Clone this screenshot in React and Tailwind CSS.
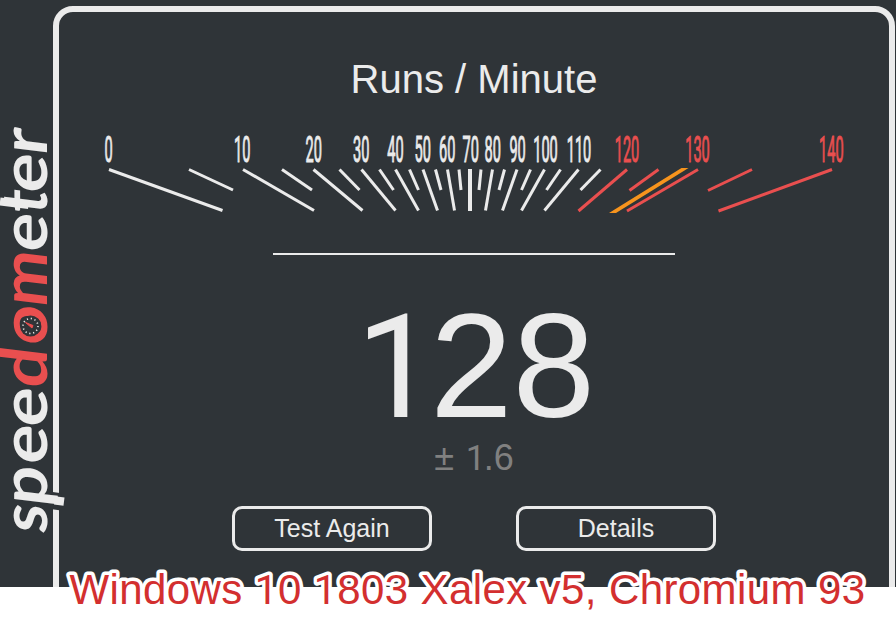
const LIGHT = '#ebebeb';
const RED = '#e94f4f';
const DARK = '#2f3438';

// Each mark: [top x, bottom x, bottom y]
const MARKS = [
  [109, 222.5, 210.5], [189, 233, 190], [243, 314, 210.5], [282, 312, 190],
  [313.5, 362.5, 210.5], [339.5, 359.5, 190], [361.5, 395.5, 210.5], [379.5, 393.5, 190],
  [395.5, 418.5, 210.5], [409.5, 418.5, 190], [423, 437.5, 210.5], [435.5, 441, 190],
  [447.5, 454.5, 210.5], [459, 461, 190], [481, 479, 190], [492.5, 485.5, 210.5],
  [504.5, 499, 190], [517, 502.5, 210.5], [530.5, 521.5, 190], [544.5, 521.5, 210.5],
  [560.5, 546.5, 190], [578.5, 544.5, 210.5], [600.5, 580.5, 190],
];
const RED_MARKS = [
  [627, 578.5, 211], [658.5, 629.5, 190.5], [698, 627, 211], [752, 708, 190.5], [832, 718.5, 211],
];
const NUMBERS = [
  [0, 108.5], [10, 242.2], [20, 313.8], [30, 361.3], [40, 395.5], [50, 422.8], [60, 447.2],
  [70, 470.8], [80, 492.8], [90, 517.6], [100, 545.5], [110, 579], [120, 627], [130, 697.5], [140, 831.3],
];

// Letters run along the rotated baseline: [letter, centre, colour, width factor]
const LETTERS = [
  ['p', 52.3, LIGHT, 1.08], ['s', 19.5, LIGHT, 1.02], ['e', 93.7, LIGHT, 1.14], ['e', 131, LIGHT, 1.14], ['d', 170.5, RED, 1.1],
  ['o', 213, RED, 1.08], ['m', 259.5, RED, 1.04], ['e', 305.7, LIGHT, 1.12], ['t', 336, LIGHT, 0.95], ['e', 365, LIGHT, 1.14], ['r', 396.5, LIGHT, 1.08],
];

function Logo() {
  return (
    <svg className="relative z-10 block shrink-0 overflow-visible" width="53" height="587">
      <g transform="translate(46.5 540) rotate(-90)">
        <path d="M39.500 5L38.300 14" stroke={DARK} strokeWidth="17" />
        {LETTERS.map(([ch, x, fill, w], i) => (
          <text
            key={i}
            transform={`translate(${x} 0) skewX(-7) scale(${w} 1)`}
            textAnchor="middle"
            fill={fill}
            className="font-['Lato',sans-serif] text-[64px] font-bold"
          >
            {ch}
          </text>
        ))}
        <path d="M39.600 8L38.400 17.500" stroke={LIGHT} strokeWidth="8.300" />
        <path d="M335 -18L338.500 -46.500" stroke={LIGHT} strokeWidth="8" />
      </g>
      <circle cx="30.500" cy="326" r="10.500" fill={DARK} />
      <circle cx="30.500" cy="326" r="7.500" fill="none" stroke={LIGHT} strokeWidth="1.600" strokeDasharray="1.200 2.727" />
      <path d="M25.500 322.500L33 325.500L32 328Z" fill={RED} stroke={RED} strokeWidth="1" />
    </svg>
  );
}

function Gauge() {
  return (
    <svg className="mt-[26px] block" width="760" height="90" viewBox="94 126 760 90">
      {NUMBERS.map(([n, x]) => (
        <text
          key={n}
          transform={`translate(${x} 161.700) scale(0.4 1)`}
          textAnchor="middle"
          fill={n >= 120 ? RED : LIGHT}
          stroke={n >= 120 ? RED : LIGHT}
          strokeWidth="1"
          className="font-['Roboto',sans-serif] text-[36.5px]"
        >
          {n}
        </text>
      ))}
      {MARKS.map(([a, b, y]) => (
        <path key={a} d={`M${a} 169.500L${b} ${y}`} stroke={LIGHT} strokeWidth="3" />
      ))}
      <path d="M470 169V211" stroke={LIGHT} strokeWidth="4" />
      {RED_MARKS.map(([a, b, y]) => (
        <path key={a} d={`M${a} 169.500L${b} ${y}`} stroke={RED} strokeWidth="3" />
      ))}
      <path d="M681.500 168H688.500L616 213H609Z" fill="#f7941d" />
    </svg>
  );
}

function Button({ children }) {
  return (
    <button className="h-[45px] w-[200px] rounded-[10px] border-[3px] border-[#ebebeb] text-[25px] leading-[39px] text-[#ebebeb]">
      {children}
    </button>
  );
}

// Footless figure one
const one = <span className="mr-[-0.05em] ml-[0.05em] font-['Roboto',sans-serif] text-[0.97em] leading-none">1</span>;
const svgOne = <tspan className="font-['Roboto',sans-serif] text-[40.7px]">1</tspan>;

export default function App() {
  return (
    <div className="h-[626px] w-[896px] overflow-hidden bg-white font-['Liberation_Sans',Arial,sans-serif]">
      <main className="flex h-[587px] overflow-hidden bg-[#2f3438]">
        <Logo />
        <section className="mt-1.5 flex h-[620px] w-[842px] shrink-0 flex-col items-center rounded-[20px] border-[6px] border-[#ebebeb] text-[#ebebeb]">
          <h1 className="mt-[44px] h-11 text-[40px] leading-[46px]">Runs / Minute</h1>
          <Gauge />
          <hr className="mt-[37px] h-0.5 w-[402px] border-0 bg-[#ebebeb]" />
          <div className="mt-[36px] h-[150px] pr-[4px] text-[148.5px] leading-[149px]">{one}28</div>
          <div className="mt-[-4px] h-[42px] text-[36px] leading-[42px] text-[#808080]">± {one}.6</div>
          <div className="mt-[27px] flex gap-[84px]">
            <Button>Test Again</Button>
            <Button>Details</Button>
          </div>
        </section>
      </main>
      <svg className="relative -mt-6 block" width="896" height="60">
        <text
          x="69.500"
          y="40.500"
          fill="#d32f2f"
          stroke="white"
          strokeWidth="7"
          strokeLinejoin="round"
          style={{ paintOrder: 'stroke' }}
          className="text-[42px] tracking-[0.4px]"
        >
          Windows {svgOne}0 {svgOne}803 Xalex v5, Chromium 93
        </text>
      </svg>
    </div>
  );
}
